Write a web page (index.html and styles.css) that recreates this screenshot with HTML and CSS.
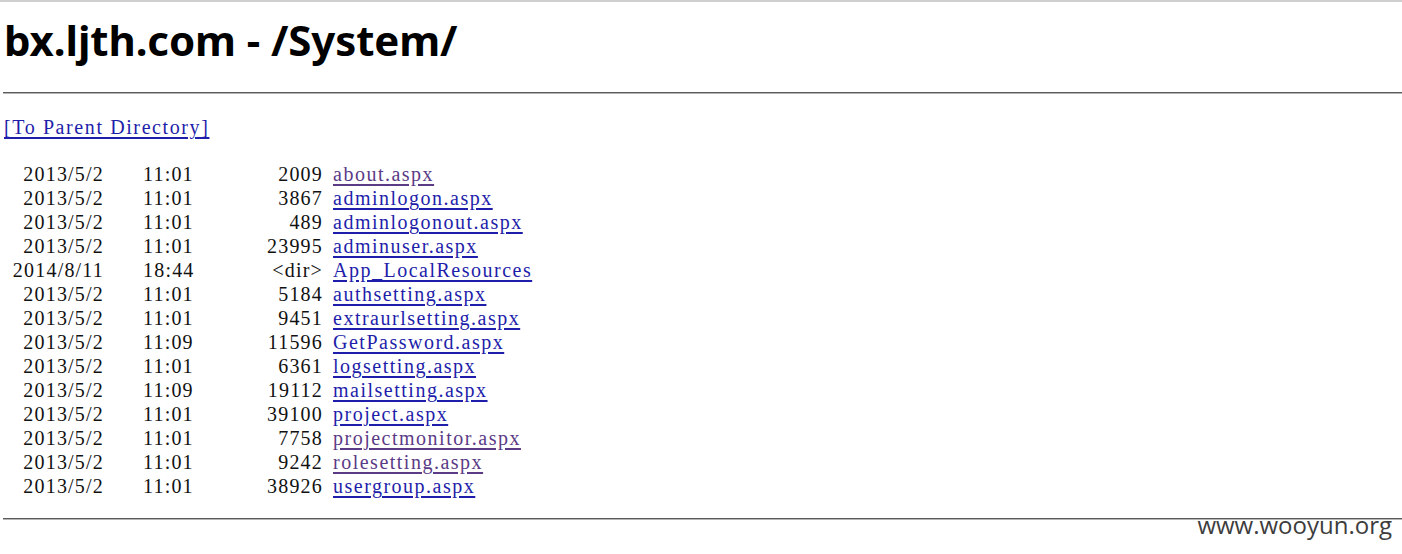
FILE: index.html
```html
<!DOCTYPE html>
<html>
<head>
<meta charset="utf-8">
<title>bx.ljth.com - /System/</title>
<link rel="stylesheet" href="styles.css">
</head>
<body>
<div class="topbar"></div>
<main class="page">
  <h1 class="title">bx.ljth.com - /System/</h1>
  <div class="rule"></div>
  <div class="listing">
    <div class="parent"><a class="link" href="#">[To Parent Directory]</a></div>
    <div class="blank"></div>
    <div class="rows">
      <span class="date">2013/5/2</span><span class="time">11:01</span><span class="size">2009</span><span class="name"><a class="link visited" href="#">about.aspx</a></span>
      <span class="date">2013/5/2</span><span class="time">11:01</span><span class="size">3867</span><span class="name"><a class="link" href="#">adminlogon.aspx</a></span>
      <span class="date">2013/5/2</span><span class="time">11:01</span><span class="size">489</span><span class="name"><a class="link" href="#">adminlogonout.aspx</a></span>
      <span class="date">2013/5/2</span><span class="time">11:01</span><span class="size">23995</span><span class="name"><a class="link" href="#">adminuser.aspx</a></span>
      <span class="date">2014/8/11</span><span class="time">18:44</span><span class="size">&lt;dir&gt;</span><span class="name"><a class="link" href="#">App_LocalResources</a></span>
      <span class="date">2013/5/2</span><span class="time">11:01</span><span class="size">5184</span><span class="name"><a class="link" href="#">authsetting.aspx</a></span>
      <span class="date">2013/5/2</span><span class="time">11:01</span><span class="size">9451</span><span class="name"><a class="link" href="#">extraurlsetting.aspx</a></span>
      <span class="date">2013/5/2</span><span class="time">11:09</span><span class="size">11596</span><span class="name"><a class="link" href="#">GetPassword.aspx</a></span>
      <span class="date">2013/5/2</span><span class="time">11:01</span><span class="size">6361</span><span class="name"><a class="link" href="#">logsetting.aspx</a></span>
      <span class="date">2013/5/2</span><span class="time">11:09</span><span class="size">19112</span><span class="name"><a class="link" href="#">mailsetting.aspx</a></span>
      <span class="date">2013/5/2</span><span class="time">11:01</span><span class="size">39100</span><span class="name"><a class="link" href="#">project.aspx</a></span>
      <span class="date">2013/5/2</span><span class="time">11:01</span><span class="size">7758</span><span class="name"><a class="link visited" href="#">projectmonitor.aspx</a></span>
      <span class="date">2013/5/2</span><span class="time">11:01</span><span class="size">9242</span><span class="name"><a class="link visited" href="#">rolesetting.aspx</a></span>
      <span class="date">2013/5/2</span><span class="time">11:01</span><span class="size">38926</span><span class="name"><a class="link" href="#">usergroup.aspx</a></span>
    </div>
  </div>
  <div class="rule rule-bottom"></div>
</main>
<div class="watermark">www.wooyun.org</div>
</body>
</html>
```
FILE: styles.css
```css
html, body {
  margin: 0;
  padding: 0;
  background: #ffffff;
}
body {
  position: relative;
  height: 554px;
  overflow: hidden;
}
.topbar {
  height: 2px;
  background: #cfcfcf;
}
.page {
  padding-left: 4px;
}
.title {
  margin: 0;
  padding-top: 10px;
  height: 68px;
  font-family: "Noto Sans", "Open Sans", sans-serif;
  font-weight: 700;
  font-size: 42px;
  line-height: 56px;
  color: #000;
  letter-spacing: -0.1px;
}
.rule {
  margin-top: 12px;
  height: 1px;
  border-top: 1px solid #5a5a5a;
  background: #b5b5b5;
  margin-left: -1px;
}
.listing {
  padding-top: 21px;
  font-family: "Liberation Serif", "Times New Roman", serif;
  font-size: 20px;
  line-height: 24px;
  color: #111;
  letter-spacing: 1.2px;
}
.parent .link {
  letter-spacing: 1.6px;
}
.blank {
  height: 23px;
}
.rows {
  display: grid;
  grid-template-columns: 100px 89px 130px auto;
  height: 336px;
}
.date, .size {
  text-align: right;
}
.time {
  padding-left: 39px;
}
.name {
  padding-left: 10px;
}
.link {
  color: #1e1eaa;
  text-decoration: underline;
  text-underline-offset: 3px;
  letter-spacing: 1.5px;
}
.link.visited {
  color: #5b3a86;
}
.rule-bottom {
  margin-top: 20px;
}
.watermark {
  position: absolute;
  right: 10px;
  top: 508px;
  font-family: "Open Sans", "Noto Sans", sans-serif;
  font-size: 24px;
  line-height: 34px;
  color: #3d3d3d;
}
```
